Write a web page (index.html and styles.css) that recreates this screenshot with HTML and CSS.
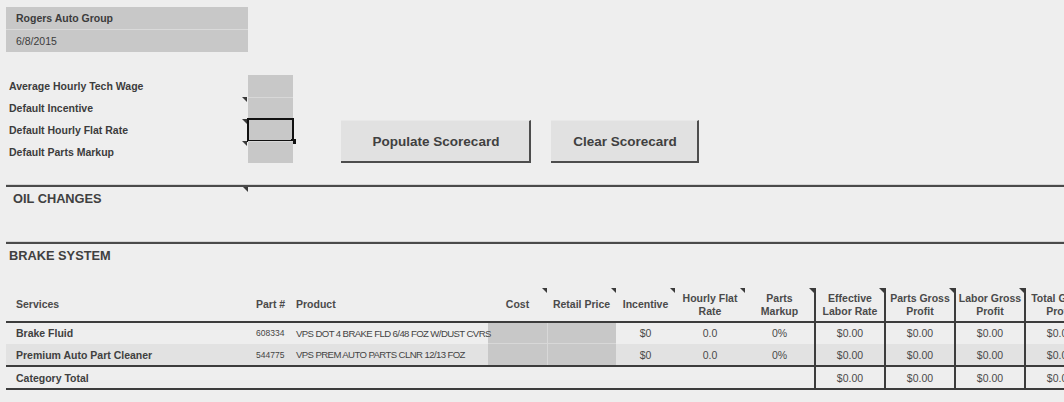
FILE: index.html
```html
<!DOCTYPE html>
<html>
<head>
<meta charset="utf-8">
<title>Scorecard</title>
<link rel="stylesheet" href="styles.css">
</head>
<body>
<div class="sheet">
  <div class="title-box">
    <div class="title-row company">Rogers Auto Group</div>
    <div class="title-row date">6/8/2015</div>
  </div>

  <div class="settings">
    <div class="params">
      <div class="label">Average Hourly Tech Wage</div><div class="input"></div>
      <div class="label note">Default Incentive</div><div class="input"></div>
      <div class="label note">Default Hourly Flat Rate</div><div class="input selected"></div>
      <div class="label note">Default Parts Markup</div><div class="input"></div>
    </div>
    <div class="actions">
      <button class="btn populate">Populate Scorecard</button>
      <button class="btn clear">Clear Scorecard</button>
    </div>
  </div>

  <section class="category oil">
    <h2 class="cat-title">OIL CHANGES</h2>
  </section>

  <section class="category brake">
    <h2 class="cat-title">BRAKE SYSTEM</h2>
    <table class="grid">
      <colgroup>
        <col class="c-service"><col class="c-part"><col class="c-product">
        <col class="c-cost"><col class="c-retail"><col class="c-incentive">
        <col class="c-hfr"><col class="c-markup"><col class="c-num">
        <col class="c-num"><col class="c-num"><col class="c-num">
      </colgroup>
      <thead>
        <tr class="head">
          <th class="left service">Services</th>
          <th class="left part">Part #</th>
          <th class="left product">Product</th>
          <th class="note">Cost</th>
          <th class="note">Retail Price</th>
          <th class="note">Incentive</th>
          <th class="note">Hourly Flat<br>Rate</th>
          <th class="note">Parts<br>Markup</th>
          <th class="sep note">Effective<br>Labor Rate</th>
          <th class="sep note">Parts Gross<br>Profit</th>
          <th class="sep note">Labor Gross<br>Profit</th>
          <th class="sep">Total Gross<br>Profit</th>
        </tr>
      </thead>
      <tbody>
        <tr class="r1">
          <td class="service">Brake Fluid</td>
          <td class="part">608334</td>
          <td class="product">VPS DOT 4 BRAKE FLD 6/48 FOZ W/DUST CVRS</td>
          <td class="entry"></td>
          <td class="entry split"></td>
          <td class="num">$0</td>
          <td class="num">0.0</td>
          <td class="num">0%</td>
          <td class="num sep">$0.00</td>
          <td class="num sep">$0.00</td>
          <td class="num sep">$0.00</td>
          <td class="num sep">$0.00</td>
        </tr>
        <tr class="r2">
          <td class="service">Premium Auto Part Cleaner</td>
          <td class="part">544775</td>
          <td class="product">VPS PREM AUTO PARTS CLNR 12/13 FOZ</td>
          <td class="entry"></td>
          <td class="entry split"></td>
          <td class="num">$0</td>
          <td class="num">0.0</td>
          <td class="num">0%</td>
          <td class="num sep">$0.00</td>
          <td class="num sep">$0.00</td>
          <td class="num sep">$0.00</td>
          <td class="num sep">$0.00</td>
        </tr>
        <tr class="total">
          <td class="service">Category Total</td>
          <td></td><td></td><td></td><td></td><td></td><td></td><td></td>
          <td class="num sep">$0.00</td>
          <td class="num sep">$0.00</td>
          <td class="num sep">$0.00</td>
          <td class="num sep">$0.00</td>
        </tr>
      </tbody>
    </table>
  </section>
</div>
</body>
</html>
```

FILE: styles.css
```css
html, body {
  margin: 0;
  padding: 0;
  overflow: hidden;
  background: #eeeeee;
}

body {
  font-family: "Liberation Sans", Arial, sans-serif;
  color: #3c3c3c;
  width: 1064px;
  height: 402px;
}

.sheet {
  padding-left: 6px;
  padding-top: 7px;
}

/* Title box */
.title-box {
  width: 242px;
  background: #c8c8c8;
}

.title-row {
  height: 22px;
  line-height: 22px;
  padding-left: 10px;
  font-size: 10.5px;
  color: #3c3c3c;
}

.company {
  font-weight: bold;
  border-bottom: 1px solid #dadada;
}

/* Settings */
.settings {
  display: flex;
  margin-top: 23px;
}

.params {
  display: grid;
  grid-template-columns: 242px 45px;
  grid-auto-rows: 22px;
}

.label {
  position: relative;
  padding-left: 3px;
  line-height: 23px;
  font-size: 10.5px;
  font-weight: bold;
  color: #3c3c3c;
}

.note::after {
  content: "";
  position: absolute;
  top: 0;
  right: 0;
  border-top: 5px solid #3a3a3a;
  border-left: 5px solid transparent;
}

.label.note::after {
  right: 1px;
}

.input {
  position: relative;
  background: #c8c8c8;
  box-sizing: border-box;
}

.input + .label + .input {
  border-top: 1px solid #d8d8d8;
}

.input.selected {
  outline: 2px solid #111;
  outline-offset: -1px;
  border-top: none;
}

.input.selected::after {
  content: "";
  position: absolute;
  right: -3px;
  bottom: -3px;
  width: 5px;
  height: 5px;
  background: #111;
}

.actions {
  display: flex;
  gap: 20px;
  margin-left: 48px;
  align-self: flex-end;
}

.btn {
  box-sizing: border-box;
  height: 43px;
  background: #e1e1e1;
  border: none;
  border-top: 1px solid #e8e8e8;
  border-right: 2px solid #4d4d4d;
  border-bottom: 2px solid #4d4d4d;
  font-family: "Liberation Sans", Arial, sans-serif;
  font-size: 13.5px;
  font-weight: bold;
  color: #404040;
  padding: 0 0 0 2px;
}

.populate { width: 190px; }
.clear { width: 148px; }

/* Categories */
.category {
  position: relative;
  border-top: 2px solid #4a4a4a;
  box-shadow: 0 -1px 0 #d4d4d4;
}

.cat-title {
  margin: 0;
  font-size: 12.8px;
  font-weight: bold;
  line-height: 16px;
  color: #404040;
  padding-top: 4px;
}

.oil {
  margin-top: 22px;
  height: 55px;
}

.oil .cat-title {
  padding-left: 7px;
}

.oil::after {
  content: "";
  position: absolute;
  top: 0;
  left: 237px;
  border-top: 5px solid #3a3a3a;
  border-left: 5px solid transparent;
}

.brake .cat-title {
  padding-left: 3px;
}

/* Grid table */
.grid {
  margin-top: 24px;
  border-collapse: separate;
  border-spacing: 0;
  table-layout: fixed;
  width: 1088px;
}

.c-service { width: 244px; }
.c-part { width: 41px; }
.c-product { width: 197px; }
.c-cost { width: 59px; }
.c-retail { width: 69px; }
.c-incentive { width: 59px; }
.c-hfr { width: 70px; }
.c-markup { width: 69px; }
.c-num { width: 70px; }

.grid th,
.grid td {
  padding: 0;
  white-space: nowrap;
}

.grid th {
  position: relative;
  font-size: 10.5px;
  font-weight: bold;
  line-height: 13px;
  color: #4a4a4a;
  text-align: center;
  vertical-align: middle;
  border-bottom: 2px solid #3c3c3c;
}

.grid th.left { text-align: left; }
.grid th.service { padding-left: 10px; }
.grid th.part { padding-left: 6px; }
.grid th.product { padding-left: 5px; }

.grid .sep {
  border-left: 2px solid #3c3c3c;
}

.head { height: 35px; }
.r1 { height: 21px; }
.r2 { height: 23px; }
.total { height: 23px; }

.grid td {
  font-size: 10.5px;
  color: #4a4a4a;
  vertical-align: middle;
  overflow: visible;
}

.r1 td { padding-bottom: 1px; }

.r2 td { background: #e2e2e2; }

.r2 td,
.total td {
  border-bottom: 2px solid #3c3c3c;
}

.grid td.service {
  padding-left: 10px;
  font-weight: bold;
  color: #404040;
}

.grid td.part {
  padding-left: 6px;
  font-size: 8.5px;
  color: #444;
}

.grid td.product {
  padding-left: 5px;
  font-size: 9.6px;
  letter-spacing: -0.6px;
  color: #444;
  overflow: visible;
}

.grid td.entry {
  background: #c8c8c8;
}

.r1 td.entry {
  box-shadow: inset 0 -1px 0 #d8d8d8;
}

.grid td.entry.split {
  box-shadow: inset 1px 0 0 #d8d8d8;
}

.r1 td.entry.split {
  box-shadow: inset 1px 0 0 #d8d8d8, inset 0 -1px 0 #d8d8d8;
}

.grid td.num {
  text-align: center;
}
```
